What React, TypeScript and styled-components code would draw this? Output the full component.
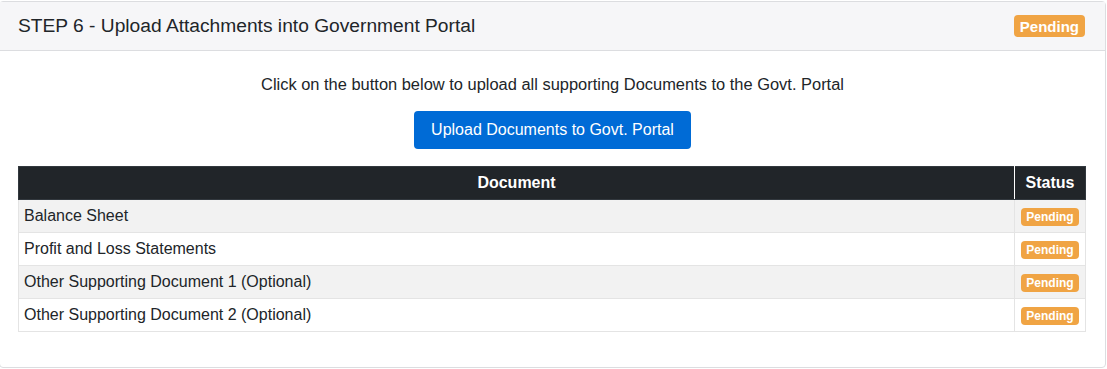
import React from "react";
import styled, { createGlobalStyle } from "styled-components";

const Global = createGlobalStyle`
  html, body { margin: 0; padding: 0; background: #fff; }
  body { font-family: "Liberation Sans", Arial, Helvetica, sans-serif; color: #212529; }
  * { box-sizing: border-box; }
`;

const Card = styled.div`
  margin: 1px 1px 0 -1px;
  border: 1px solid #dcdde0;
  border-radius: 4px;
  background: #fff;
  height: 367px;
  display: flex;
  flex-direction: column;
`;

const Header = styled.div`
  height: 49px;
  background: #f6f6f8;
  border-bottom: 1px solid #dcdde0;
  display: flex;
  align-items: center;
  justify-content: space-between;
  padding: 0 20px 0 18px;
`;

const Title = styled.h5`
  margin: 0;
  font-size: 19.2px;
  font-weight: 400;
  color: #212529;
`;

const Badge = styled.span<{ $small?: boolean }>`
  display: inline-flex;
  align-items: center;
  justify-content: center;
  background: #f0a444;
  color: #fff;
  font-weight: 700;
  border-radius: 4px;
  font-size: ${(p) => (p.$small ? "12px" : "15px")};
  height: ${(p) => (p.$small ? "18px" : "22px")};
  padding: ${(p) => (p.$small ? "0 5px" : "0 6px")};
`;

const Body = styled.div`
  padding: 24px 19px 0 19px;
  display: flex;
  flex-direction: column;
  align-items: center;
`;

const Lead = styled.p`
  margin: 0;
  font-size: 16.45px;
  line-height: 18px;
  text-align: center;
`;

const Button = styled.button`
  margin-top: 18px;
  height: 38px;
  padding: 0 17px;
  border: none;
  border-radius: 4px;
  background: #006bd6;
  color: #fff;
  font-family: inherit;
  font-size: 16px;
  cursor: pointer;
`;

const Table = styled.table`
  margin: 17px 0 0 -1px;
  width: calc(100% + 1px);
  border-collapse: collapse;
  font-size: 16px;
`;

const Th = styled.th<{ $narrow?: boolean }>`
  background: #212529;
  color: #fff;
  font-weight: 700;
  height: 33px;
  padding: 0 5px;
  text-align: center;
  border: 1px solid #32383e;
  border-right-color: ${(p) => (p.$narrow ? "#32383e" : "#fff")};
  width: ${(p) => (p.$narrow ? "71px" : "auto")};
`;

const Row = styled.tr<{ $striped: boolean }>`
  background: ${(p) => (p.$striped ? "#f2f2f2" : "#fff")};
`;

const Td = styled.td<{ $center?: boolean }>`
  height: 33px;
  padding: 0 5px;
  border: 1px solid #e4e4e4;
  text-align: ${(p) => (p.$center ? "center" : "left")};
  vertical-align: middle;
`;

const docs = [
  "Balance Sheet",
  "Profit and Loss Statements",
  "Other Supporting Document 1 (Optional)",
  "Other Supporting Document 2 (Optional)",
];

export default function App() {
  return (
    <>
      <Global />
      <Card>
        <Header>
          <Title>STEP 6 - Upload Attachments into Government Portal</Title>
          <Badge>Pending</Badge>
        </Header>
        <Body>
          <Lead>Click on the button below to upload all supporting Documents to the Govt. Portal</Lead>
          <Button>Upload Documents to Govt. Portal</Button>
          <Table>
            <thead>
              <tr>
                <Th>Document</Th>
                <Th $narrow>Status</Th>
              </tr>
            </thead>
            <tbody>
              {docs.map((d, i) => (
                <Row key={d} $striped={i % 2 === 0}>
                  <Td>{d}</Td>
                  <Td $center>
                    <Badge $small>Pending</Badge>
                  </Td>
                </Row>
              ))}
            </tbody>
          </Table>
        </Body>
      </Card>
    </>
  );
}
